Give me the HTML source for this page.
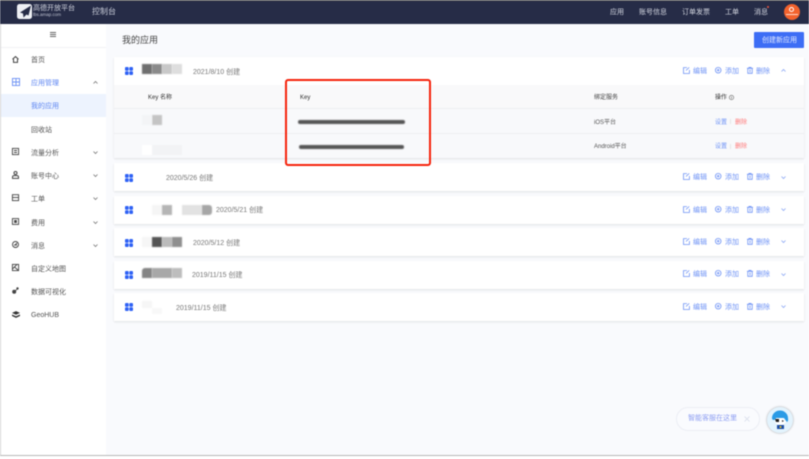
<!DOCTYPE html>
<html lang="zh"><head><meta charset="utf-8"><title>我的应用</title>
<style>
*{box-sizing:border-box}
html,body{margin:0;padding:0;background:#fff}
body{width:809px;height:459px;overflow:hidden;position:relative;font-family:"Liberation Sans","Noto Sans CJK SC",sans-serif}
#r{position:absolute;left:0;top:0;width:809px;height:459px;overflow:hidden;background:#f9fafd;filter:blur(.45px)}
.a{position:absolute}
.t{position:absolute;white-space:nowrap;line-height:10px;font-size:7px;color:#555;margin-top:1px}
.nav{color:#d3d6e0;top:7px;font-size:7px}
.side{left:31px;color:#555;margin-top:2px}
.d{color:#777;margin-top:2px}
.card{position:absolute;left:114px;width:690px;background:#fff;box-shadow:0 1px 2px rgba(0,0,0,.1)}
.b{position:absolute;filter:blur(.6px)}
.act{color:#6f93f5;font-size:7px}
svg{position:absolute;overflow:visible}
</style></head><body><div id="r">

<!-- header -->
<div class="a" style="left:0;top:0;width:809px;height:24px;background:#262c47;border-top:1px solid #555"></div>
<svg style="left:17px;top:4px" width="15" height="15" viewBox="0 0 15 15"><rect x="0" y="0" width="15" height="15" rx="2.5" fill="#eef0f5"/><path d="M14 1.500 3 8.500l3 1 .5 4L9.500 10.500l2 1z" fill="#262c47"/></svg>
<div class="t" style="left:33px;top:3px;font-size:7px;color:#d0d3de">高德开放平台</div>
<div class="t" style="left:33px;top:9px;font-size:4.500px;color:#c0c4d2">lbs.amap.com</div>
<div class="t" style="left:92px;top:6px;font-size:8px;color:#c9cdd9">控制台</div>
<div class="t nav" style="left:610px">应用</div>
<div class="t nav" style="left:639px">账号信息</div>
<div class="t nav" style="left:682px">订单发票</div>
<div class="t nav" style="left:725px">工单</div>
<div class="t nav" style="left:754px">消息</div>
<div class="a" style="left:767px;top:6px;width:2px;height:2px;border-radius:50%;background:#f0553a"></div>
<div class="a" style="left:784px;top:4px;width:16px;height:16px;border-radius:50%;background:#f2622d"></div>
<div class="a" style="left:789px;top:7px;width:5px;height:5px;border-radius:50%;border:1px solid #fff"></div>
<div class="a" style="left:786px;top:14px;width:12px;height:1px;background:#ffd9c9"></div>

<!-- left edge / sidebar -->
<div class="a" style="left:0;top:24px;width:1px;height:435px;background:#d6d6d6"></div>
<div class="a" style="left:1px;top:24px;width:105px;height:432px;background:#fff"></div>
<div class="a" style="left:1px;top:47px;width:105px;height:1px;background:#f1f2f4"></div>
<div class="a" style="left:50px;top:32px;width:6px;height:1px;background:#666"></div>
<div class="a" style="left:50px;top:34px;width:6px;height:1px;background:#666"></div>
<div class="a" style="left:50px;top:36px;width:6px;height:1px;background:#666"></div>
<div class="a" style="left:1px;top:94px;width:105px;height:23px;background:#edf3fe"></div>

<svg style="left:12px;top:56px" width="7" height="7" viewBox="0 0 7 7" fill="none" stroke="#444" stroke-width="1"><path d="M.5 3.300 3.500.6l3 2.700M1.500 3v3.400h4V3"/></svg>
<svg style="left:11.500px;top:78px" width="8" height="8" viewBox="0 0 7 7" fill="none" stroke="#6f93f5" stroke-width=".8"><rect x=".4" y=".4" width="6.200" height="6.200"/><path d="M3.500.4v6.200M.4 3.500h6.200"/></svg>
<svg style="left:12px;top:148px" width="7" height="7" viewBox="0 0 7 7" fill="none" stroke="#444" stroke-width=".9"><rect x=".4" y=".4" width="6.200" height="6.200"/><path d="M2 2.500h3M2 4.500h3"/></svg>
<svg style="left:12px;top:171px" width="7" height="8" viewBox="0 0 7 8" fill="none" stroke="#444" stroke-width="1"><circle cx="3.500" cy="2" r="1.500"/><path d="M.5 7.400V6q0-1.400 1.500-1.400h3Q6.500 4.600 6.500 6v1.400z"/></svg>
<svg style="left:12px;top:194px" width="7" height="7" viewBox="0 0 7 7" fill="none" stroke="#444" stroke-width=".9"><rect x=".4" y=".7" width="6.200" height="5.900"/><path d="M.4 3.500h6.200"/></svg>
<svg style="left:12px;top:218px" width="7" height="7" viewBox="0 0 7 7" fill="none" stroke="#444" stroke-width=".9"><rect x=".4" y=".6" width="6.200" height="5.800"/><rect x="2.600" y="2.500" width="1.800" height="2" fill="#444"/></svg>
<svg style="left:12px;top:241px" width="7" height="7" viewBox="0 0 7 7" fill="none" stroke="#444" stroke-width=".9"><circle cx="3.500" cy="3.500" r="3"/><path d="M2 4h3M3.500 3.500 5 2"/></svg>
<svg style="left:12px;top:264px" width="7" height="7" viewBox="0 0 7 7" fill="none" stroke="#444" stroke-width=".9"><rect x=".4" y=".4" width="6.200" height="6.200"/><path d="M.4 5 5 .4M2.500 3 6.600 6.600"/></svg>
<svg style="left:12px;top:287px" width="7" height="7" viewBox="0 0 7 7" fill="#444"><circle cx="2.200" cy="4.800" r="2"/><circle cx="5.500" cy="1.500" r="1.200"/><path d="M3 3.500 5 1.800l.4.400L3.600 4.200z"/></svg>
<svg style="left:11.500px;top:310.500px" width="8" height="7" viewBox="0 0 7 6" fill="#333"><path d="M3.500 0 7 1.600 3.500 3.200 0 1.600zM0 3l3.500 1.500L7 3v1.300L3.500 6 0 4.300z"/></svg>

<div class="t side" style="top:54px">首页</div>
<div class="t side" style="top:77px;color:#5f87f2">应用管理</div>
<div class="t side" style="top:100px;color:#5f87f2">我的应用</div>
<div class="t side" style="top:124px">回收站</div>
<div class="t side" style="top:147px">流量分析</div>
<div class="t side" style="top:170px">账号中心</div>
<div class="t side" style="top:193px">工单</div>
<div class="t side" style="top:217px">费用</div>
<div class="t side" style="top:240px">消息</div>
<div class="t side" style="top:263px">自定义地图</div>
<div class="t side" style="top:286px">数据可视化</div>
<div class="t side" style="top:309px">GeoHUB</div>

<svg style="left:93px;top:81px" width="5" height="3" fill="none" stroke="#777" stroke-width=".8"><path d="M.5 2.500 2.500.5l2 2"/></svg>
<svg style="left:93px;top:151px" width="5" height="3" fill="none" stroke="#777" stroke-width=".8"><path d="M.5.500l2 2 2-2"/></svg>
<svg style="left:93px;top:174px" width="5" height="3" fill="none" stroke="#777" stroke-width=".8"><path d="M.5.500l2 2 2-2"/></svg>
<svg style="left:93px;top:197px" width="5" height="3" fill="none" stroke="#777" stroke-width=".8"><path d="M.5.500l2 2 2-2"/></svg>
<svg style="left:93px;top:221px" width="5" height="3" fill="none" stroke="#777" stroke-width=".8"><path d="M.5.500l2 2 2-2"/></svg>
<svg style="left:93px;top:244px" width="5" height="3" fill="none" stroke="#777" stroke-width=".8"><path d="M.5.500l2 2 2-2"/></svg>

<!-- main header -->
<div class="t" style="left:122px;top:34px;font-size:9px;color:#444">我的应用</div>
<div class="a" style="left:754px;top:32px;width:50px;height:16px;background:#3d6df5;border-radius:1px"></div>
<div class="t" style="left:762px;top:35px;color:#e6ecff">创建新应用</div>

<!-- cards -->
<div class="card" style="top:57px;height:101px"></div>
<div class="a" style="left:114px;top:85px;width:690px;height:24px;background:#f9f9fa;border-bottom:1px solid #eeeff1"></div>
<div class="a" style="left:114px;top:109px;width:690px;height:25px;background:#f8f9fb;border-bottom:1px solid #eeeff1"></div>
<div class="a" style="left:114px;top:134px;width:690px;height:24px;background:#f8f9fb"></div>
<div class="card" style="top:163px;height:28px"></div>
<div class="card" style="top:196px;height:28px"></div>
<div class="card" style="top:228px;height:28px"></div>
<div class="card" style="top:261px;height:28px"></div>
<div class="card" style="top:293px;height:28px"></div>

<!-- grid icons -->
<svg width="0" height="0"><defs><g id="gr" fill="#2f62f5"><rect width="3.700" height="3.700" rx="1"/><rect x="4.300" width="3.700" height="3.700" rx="1"/><rect y="4.300" width="3.700" height="3.700" rx="1"/><rect x="4.300" y="4.300" width="3.700" height="3.700" rx="1"/></g></defs></svg>
<svg style="left:125px;top:67px" width="8" height="8"><use href="#gr"/></svg>
<svg style="left:125px;top:174px" width="8" height="8"><use href="#gr"/></svg>
<svg style="left:125px;top:206px" width="8" height="8"><use href="#gr"/></svg>
<svg style="left:125px;top:239px" width="8" height="8"><use href="#gr"/></svg>
<svg style="left:125px;top:271px" width="8" height="8"><use href="#gr"/></svg>
<svg style="left:125px;top:303px" width="8" height="8"><use href="#gr"/></svg>

<!-- mosaic blocks -->
<div class="b" style="left:142px;top:64px;width:10px;height:10px;background:#6f6f6f"></div>
<div class="b" style="left:152px;top:64px;width:10px;height:10px;background:#8a8a8a"></div>
<div class="b" style="left:162px;top:64px;width:10px;height:10px;background:#c8c8c8"></div>
<div class="b" style="left:172px;top:64px;width:10px;height:10px;background:#dedede"></div>
<div class="b" style="left:152px;top:115px;width:10px;height:10px;background:#c4c4c4"></div>
<div class="b" style="left:142px;top:115px;width:10px;height:10px;background:#f3f4f6"></div>
<div class="b" style="left:152px;top:145px;width:30px;height:10px;background:#f2f3f5"></div>
<div class="b" style="left:142px;top:145px;width:10px;height:10px;background:#fff"></div>
<div class="b" style="left:152px;top:205px;width:10px;height:10px;background:#f5f5f5"></div>
<div class="b" style="left:162px;top:205px;width:10px;height:10px;background:#b5b5b5"></div>
<div class="b" style="left:182px;top:205px;width:20px;height:10px;background:#e2e2e2"></div>
<div class="b" style="left:202px;top:205px;width:10px;height:10px;background:#a6a6a6;border-radius:0 3px 3px 0"></div>
<div class="b" style="left:142px;top:237px;width:10px;height:10px;background:#f6f6f6"></div>
<div class="b" style="left:152px;top:237px;width:10px;height:10px;background:#555"></div>
<div class="b" style="left:162px;top:237px;width:10px;height:10px;background:#bbb"></div>
<div class="b" style="left:172px;top:237px;width:10px;height:10px;background:#8f8f8f"></div>
<div class="b" style="left:142px;top:268px;width:10px;height:10px;background:#858585;border-radius:3px 0 0 0"></div>
<div class="b" style="left:152px;top:268px;width:20px;height:10px;background:#a8a8a8"></div>
<div class="b" style="left:172px;top:268px;width:10px;height:10px;background:#bdbdbd"></div>
<div class="b" style="left:142px;top:301px;width:10px;height:7px;background:#f6f6f6"></div>
<div class="b" style="left:152px;top:308px;width:10px;height:6px;background:#f8f8f8"></div>

<!-- dates -->
<div class="t d" style="left:193px;top:66px">2021/8/10 创建</div>
<div class="t d" style="left:166px;top:172px">2020/5/26 创建</div>
<div class="t d" style="left:216px;top:204px">2020/5/21 创建</div>
<div class="t d" style="left:193px;top:237px">2020/5/12 创建</div>
<div class="t d" style="left:192px;top:269px">2019/11/15 创建</div>
<div class="t d" style="left:176px;top:302px">2019/11/15 创建</div>

<!-- table -->
<div class="t" style="left:148px;top:92px;font-size:6px;color:#333">Key 名称</div>
<div class="t" style="left:300px;top:92px;font-size:6px;color:#333">Key</div>
<div class="t" style="left:594px;top:92px;font-size:6px;color:#444">绑定服务</div>
<div class="t" style="left:715px;top:92px;font-size:6px;color:#333">操作</div>
<svg style="left:729px;top:94.500px" width="5" height="5" fill="none" stroke="#666" stroke-width=".6"><circle cx="2.500" cy="2.500" r="2.200"/><path d="M2.500 1.500v2.200"/></svg>
<div class="t" style="left:594px;top:117px;font-size:6px;color:#555">iOS平台</div>
<div class="t" style="left:594px;top:141px;font-size:6px;color:#555">Android平台</div>
<div class="t" style="left:715px;top:117px;font-size:6px;color:#6f93f5">设置</div>
<div class="t" style="left:735px;top:117px;font-size:6px;color:#f77">删除</div>
<div class="t" style="left:715px;top:141px;font-size:6px;color:#6f93f5">设置</div>
<div class="t" style="left:735px;top:141px;font-size:6px;color:#f77">删除</div>
<div class="a" style="left:730px;top:119px;width:1px;height:5px;background:#e6e6e6"></div>
<div class="a" style="left:730px;top:144px;width:1px;height:5px;background:#e6e6e6"></div>

<!-- redacted keys -->
<div class="b" style="left:298px;top:120px;width:107px;height:4px;background:#555;border-radius:2px"></div>
<div class="b" style="left:299px;top:145px;width:105px;height:4px;background:#555;border-radius:2px"></div>

<!-- red box -->
<div class="a" style="left:285px;top:79px;width:146px;height:87px;border:2px solid #f5230c;border-radius:3px"></div>

<!-- actions -->
<div class="t act" style="left:693px;top:66px">编辑</div><div class="t act" style="left:725px;top:66px">添加</div><div class="t act" style="left:756px;top:66px">删除</div>
<div class="t act" style="left:693px;top:172px">编辑</div><div class="t act" style="left:725px;top:172px">添加</div><div class="t act" style="left:756px;top:172px">删除</div>
<div class="t act" style="left:693px;top:205px">编辑</div><div class="t act" style="left:725px;top:205px">添加</div><div class="t act" style="left:756px;top:205px">删除</div>
<div class="t act" style="left:693px;top:237px">编辑</div><div class="t act" style="left:725px;top:237px">添加</div><div class="t act" style="left:756px;top:237px">删除</div>
<div class="t act" style="left:693px;top:269px">编辑</div><div class="t act" style="left:725px;top:269px">添加</div><div class="t act" style="left:756px;top:269px">删除</div>
<div class="t act" style="left:693px;top:302px">编辑</div><div class="t act" style="left:725px;top:302px">添加</div><div class="t act" style="left:756px;top:302px">删除</div>

<svg width="0" height="0"><defs>
<g id="ed" fill="none" stroke="#6f93f5" stroke-width=".8"><path d="M4 .6H.5v5.900h5.900V3M3 3.500 6.200.4"/></g>
<g id="ad" fill="none" stroke="#6f93f5" stroke-width=".8"><circle cx="3.200" cy="3.200" r="2.800"/><path d="M1.800 3.200h2.800M3.200 1.800v2.800"/></g>
<g id="de" fill="none" stroke="#6f93f5" stroke-width=".8"><path d="M0 1.300h6M2 1.300V.4h2v.9M.8 1.300v5h4.400v-5M3 2.500v2.800"/></g>
<g id="dn" fill="none" stroke="#8aa6f5" stroke-width=".8"><path d="M.5.500l2 2 2-2"/></g>
</defs></svg>
<svg style="left:683px;top:67px" width="7" height="7"><use href="#ed"/></svg><svg style="left:715px;top:67px" width="7" height="7"><use href="#ad"/></svg><svg style="left:747px;top:67px" width="7" height="7"><use href="#de"/></svg>
<svg style="left:683px;top:173px" width="7" height="7"><use href="#ed"/></svg><svg style="left:715px;top:173px" width="7" height="7"><use href="#ad"/></svg><svg style="left:747px;top:173px" width="7" height="7"><use href="#de"/></svg>
<svg style="left:683px;top:206px" width="7" height="7"><use href="#ed"/></svg><svg style="left:715px;top:206px" width="7" height="7"><use href="#ad"/></svg><svg style="left:747px;top:206px" width="7" height="7"><use href="#de"/></svg>
<svg style="left:683px;top:238px" width="7" height="7"><use href="#ed"/></svg><svg style="left:715px;top:238px" width="7" height="7"><use href="#ad"/></svg><svg style="left:747px;top:238px" width="7" height="7"><use href="#de"/></svg>
<svg style="left:683px;top:270px" width="7" height="7"><use href="#ed"/></svg><svg style="left:715px;top:270px" width="7" height="7"><use href="#ad"/></svg><svg style="left:747px;top:270px" width="7" height="7"><use href="#de"/></svg>
<svg style="left:683px;top:303px" width="7" height="7"><use href="#ed"/></svg><svg style="left:715px;top:303px" width="7" height="7"><use href="#ad"/></svg><svg style="left:747px;top:303px" width="7" height="7"><use href="#de"/></svg>
<svg style="left:781px;top:69px" width="5" height="3" fill="none" stroke="#8aa6f5" stroke-width=".8"><path d="M.5 2.500l2-2 2 2"/></svg>
<svg style="left:781px;top:176px" width="5" height="3"><use href="#dn"/></svg>
<svg style="left:781px;top:208px" width="5" height="3"><use href="#dn"/></svg>
<svg style="left:781px;top:240px" width="5" height="3"><use href="#dn"/></svg>
<svg style="left:781px;top:273px" width="5" height="3"><use href="#dn"/></svg>
<svg style="left:781px;top:305px" width="5" height="3"><use href="#dn"/></svg>

<!-- chat -->
<div class="a" style="left:676px;top:407px;width:84px;height:24px;border-radius:12px;border:1px solid #eceef5;background:#fafbfe"></div>
<div class="t" style="left:688px;top:413px;color:#8c9df2">智能客服在这里</div>
<svg style="left:744px;top:416px" width="6" height="6" stroke="#dfe2ee" stroke-width=".9"><path d="M.5.500l5 5M5.500.500l-5 5"/></svg>
<div class="a" style="left:767px;top:407px;width:26px;height:26px;border-radius:50%;background:#e3f3fd;box-shadow:0 0 2px rgba(0,0,0,.35)"></div>
<svg style="left:771px;top:410px" width="18" height="20" viewBox="0 0 18 20"><path d="M1 8a8 7.500 0 0 1 16 0q.5 3-1 4l-3-4H6L3 10Q1 10 1 8z" fill="#2a9be6"/><path d="M5 8h7l3 4q-2 3-6 3t-5-3z" fill="#fff"/><path d="M4 9h4v3H5zM11 10l2 1-2 1z" fill="#222"/><path d="M6 15h7v4H6z" fill="#1b4ca6"/><circle cx="9.500" cy="17" r="1" fill="#f5d020"/></svg>

<!-- bottom line -->
<div class="a" style="left:0;top:455px;width:809px;height:1px;background:#b8b8b8"></div>
<div class="a" style="left:0;top:456px;width:809px;height:3px;background:#fff"></div>
</div></body></html>
